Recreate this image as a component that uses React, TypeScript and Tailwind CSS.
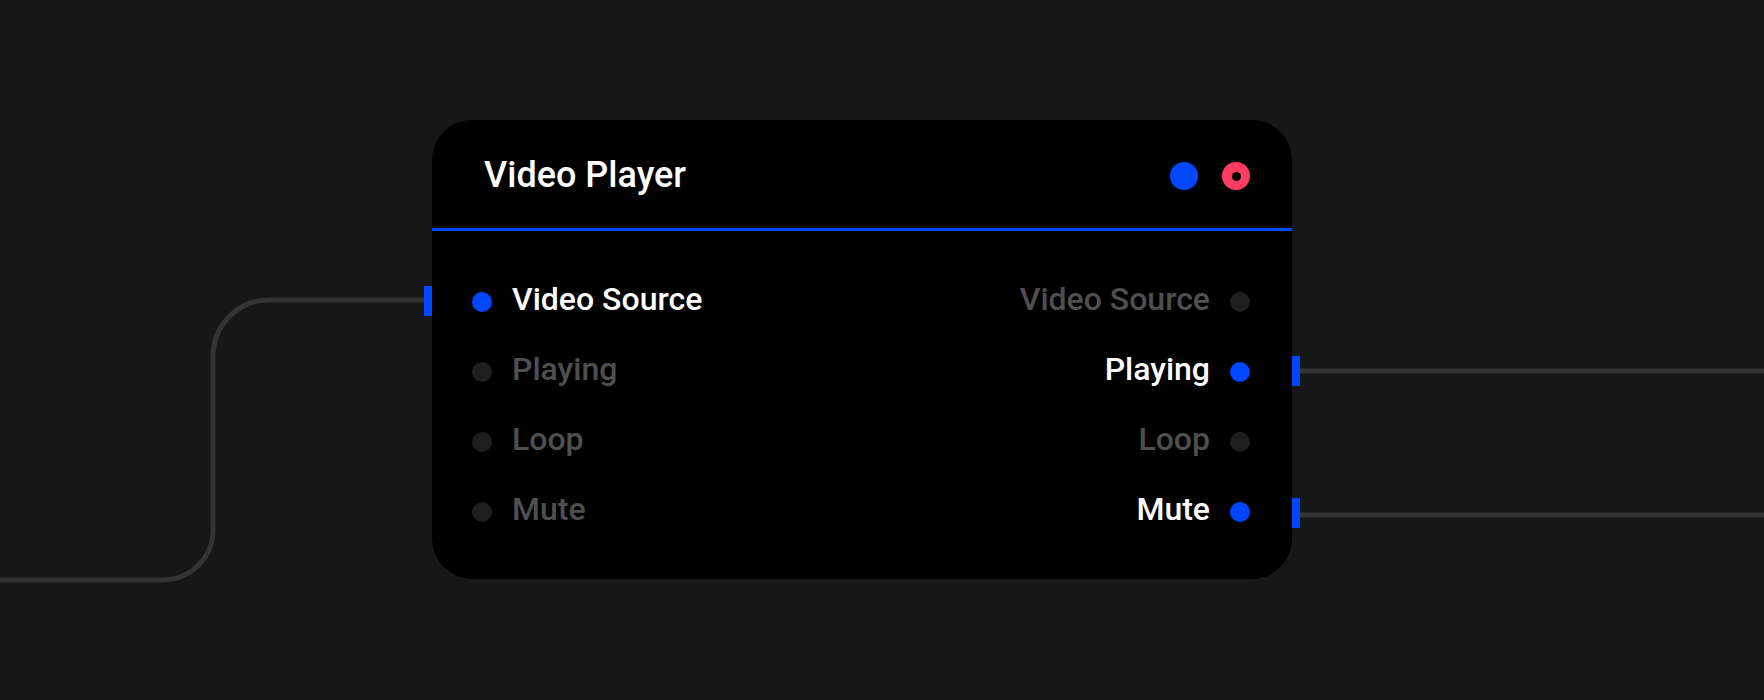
import React from 'react'

type Port = { label: string; active: boolean }

const inputs: Port[] = [
  { label: 'Video Source', active: true },
  { label: 'Playing', active: false },
  { label: 'Loop', active: false },
  { label: 'Mute', active: false },
]

const outputs: Port[] = [
  { label: 'Video Source', active: false },
  { label: 'Playing', active: true },
  { label: 'Loop', active: false },
  { label: 'Mute', active: true },
]

function Dot({ active }: { active: boolean }) {
  return (
    <span
      className={
        active
          ? 'block h-5 w-5 shrink-0 rounded-full bg-[#0047ff]'
          : 'block h-5 w-5 shrink-0 rounded-full bg-[#1e1e1e]'
      }
    />
  )
}

function Label({ port }: { port: Port }) {
  return (
    <span
      className={
        port.active
          ? '-translate-y-[3px] text-[32px] font-medium leading-none text-white'
          : '-translate-y-[3px] text-[32px] font-medium leading-none text-[#4f4f4f]'
      }
    >
      {port.label}
    </span>
  )
}

function Wires() {
  return (
    <svg className="absolute inset-0 h-full w-full" viewBox="0 0 1764 700" fill="none">
      <path
        d="M 0 580 H 163 A 50 50 0 0 0 213 530 V 356 A 56 56 0 0 1 269 300 H 428"
        stroke="#343434"
        strokeWidth="5"
      />
      <path d="M 1296 371 H 1764" stroke="#343434" strokeWidth="5" />
      <path d="M 1296 515 H 1764" stroke="#343434" strokeWidth="5" />
    </svg>
  )
}

export default function App() {
  return (
    <div
      className="relative h-[700px] w-full overflow-hidden bg-[#171717] pl-[432px] pt-[120px]"
      style={{ fontFamily: 'Roboto, "Noto Sans", sans-serif' }}
    >
      <Wires />
      <div className="relative flex h-[459px] w-[860px] flex-col rounded-[40px] bg-black">
        {/* header */}
        <div className="flex h-[108px] items-center justify-between pl-[52px] pr-[42px]">
          <h1 className="translate-y-[1px] text-[36px] font-medium leading-none text-white">Video Player</h1>
          <div className="flex items-center gap-6 pt-1">
            <span className="block h-7 w-7 rounded-full bg-[#0047ff]" />
            <span className="flex h-7 w-7 items-center justify-center rounded-full bg-[#ff3d63]">
              <span className="block h-[9px] w-[9px] rounded-full bg-black" />
            </span>
          </div>
        </div>
        <div className="h-[3px] bg-[#0047ff]" />

        {/* ports */}
        <div className="flex flex-1 justify-between pb-[32px] pl-[40px] pr-[42px] pt-[36px]">
          <div className="flex flex-col">
            {inputs.map((p) => (
              <div key={p.label} className="flex h-[70px] items-center gap-[20px]">
                <Dot active={p.active} />
                <Label port={p} />
              </div>
            ))}
          </div>
          <div className="flex flex-col items-end">
            {outputs.map((p) => (
              <div key={p.label} className="flex h-[70px] items-center gap-[20px]">
                <Label port={p} />
                <Dot active={p.active} />
              </div>
            ))}
          </div>
        </div>

        {/* connection handles */}
        <span className="absolute -left-2 top-[166px] block h-[30px] w-2 bg-[#0047ff]" />
        <span className="absolute -right-2 top-[236px] block h-[30px] w-2 bg-[#0047ff]" />
        <span className="absolute -right-2 top-[378px] block h-[30px] w-2 bg-[#0047ff]" />
      </div>
    </div>
  )
}
